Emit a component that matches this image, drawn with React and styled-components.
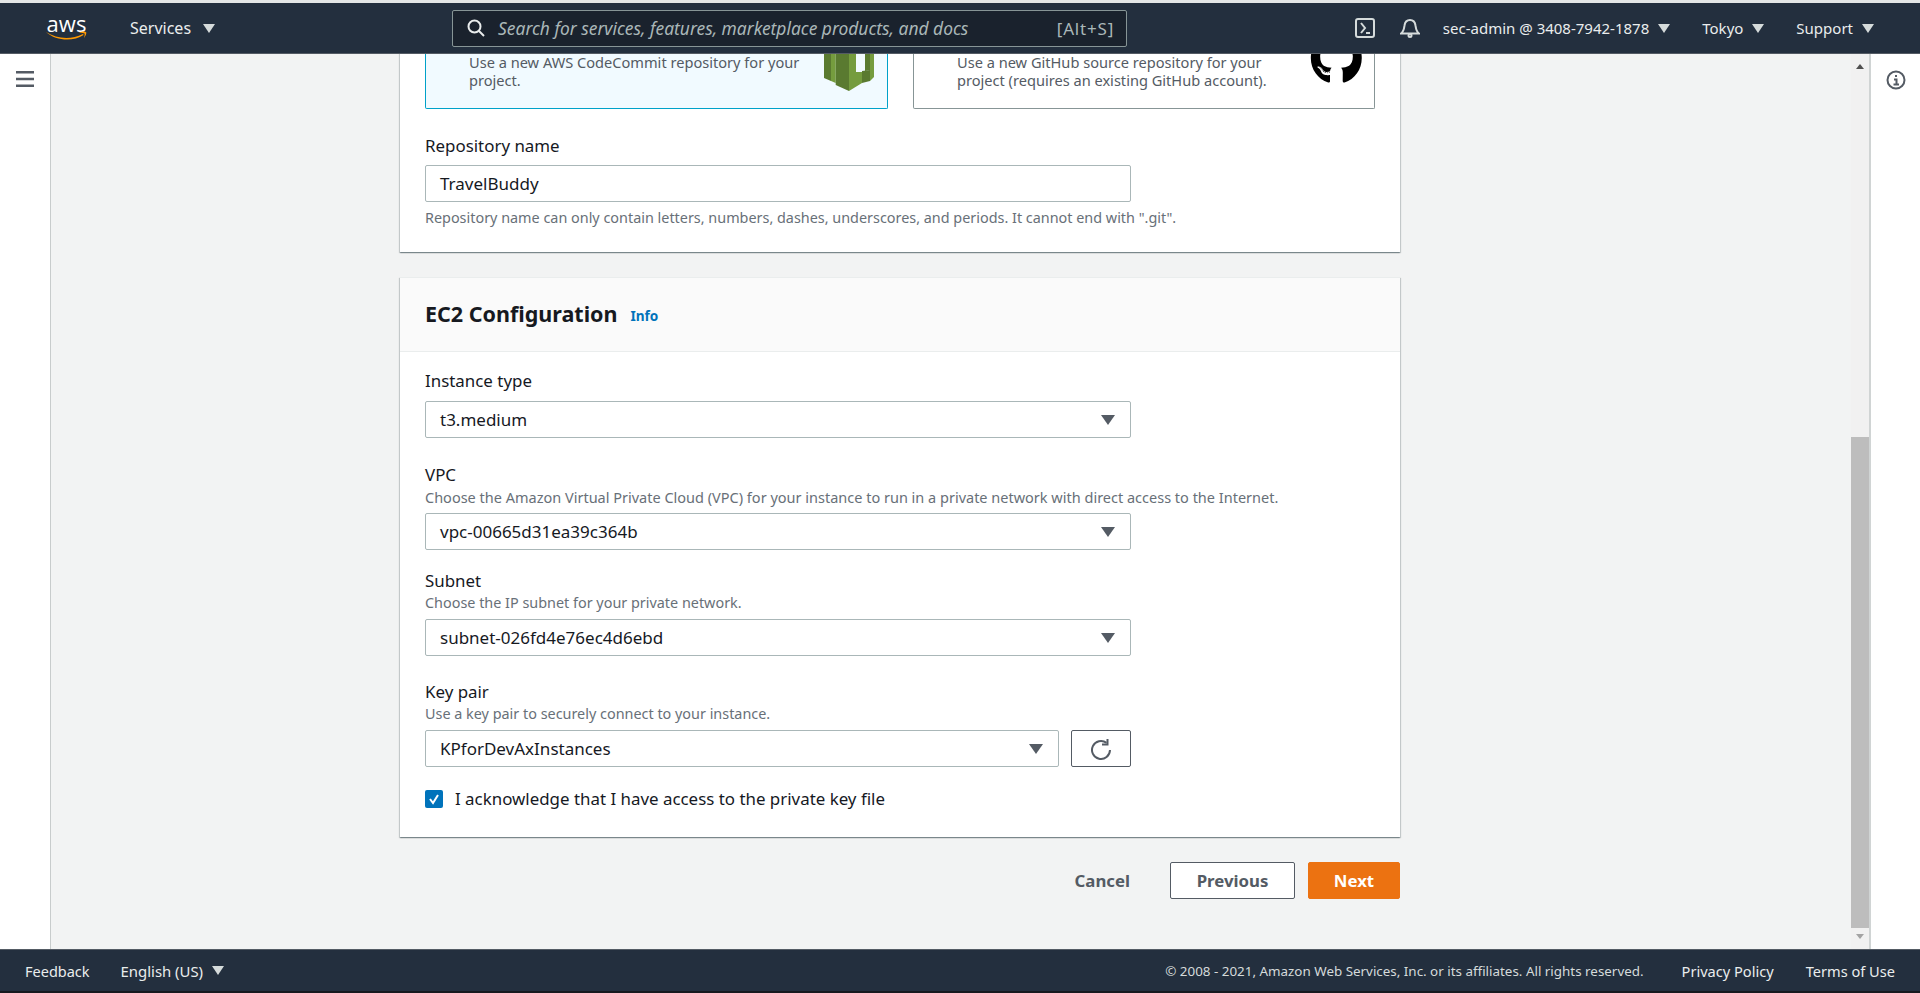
import React from 'react'
import styled, { createGlobalStyle } from 'styled-components'
import { FaGithub } from 'react-icons/fa'

const Global = createGlobalStyle`
  html, body { margin: 0; padding: 0; height: 100%; overflow: hidden; }
  body { font-family: "Noto Sans", "Liberation Sans", sans-serif; font-size: 14px; color: #16191f; }
  * { box-sizing: border-box; }
`

const Page = styled.div`
  height: 993px;
  display: flex;
  flex-direction: column;
  background: #232f3e;
  border-top: 3px solid #e4e6e6;
`

const Header = styled.header`
  height: 51px;
  flex: none;
  display: flex;
  align-items: center;
  padding: 0 46px;
  background: #232f3e;
  color: #eaeded;
  border-bottom: 1px solid #545b64;
`

const Logo = styled.div`
  position: relative;
  width: 41px;
  height: 26px;
  margin-right: 43px;
  color: #fff;
  font-family: "Open Sans", sans-serif;
  font-size: 22px;
  line-height: 17px;
  text-align: center;
  svg { position: absolute; left: 0; bottom: 0; }
`

const NavItem = styled.span`
  display: inline-flex;
  align-items: center;
  gap: ${(p) => p.$gap || 9}px;
  margin-left: ${(p) => p.$left || 0}px;
  font-size: ${(p) => p.$size || 15}px;
  white-space: nowrap;
`

const NavIcon = styled.svg`
  flex: none;
  margin-left: ${(p) => p.$left || 0}px;
`

const Caret = styled.i`
  width: 0;
  height: 0;
  border-left: ${(p) => p.$size || 6}px solid transparent;
  border-right: ${(p) => p.$size || 6}px solid transparent;
  border-top: ${(p) => (p.$size || 6) + 3}px solid ${(p) => p.$color || '#d5dbdb'};
`

const Search = styled.div`
  width: 675px;
  height: 37px;
  margin-left: 237px;
  margin-right: auto;
  display: flex;
  align-items: center;
  padding: 0 12px 0 14px;
  background: #1a222d;
  border: 1px solid #879596;
  border-radius: 2px;
  color: #aab7b8;
  font-size: 17.4px;
  font-style: italic;
  svg { margin-right: 13px; flex: none; }
  span { flex: 1; white-space: nowrap; }
  b { font-size: 17px; letter-spacing: 0.8px; font-style: normal; font-weight: 400; color: #aab7b8; }
`

const Body = styled.div`
  flex: 1;
  min-height: 0;
  display: flex;
  background: #fff;
`

const SideRail = styled.aside`
  width: ${(p) => p.$width}px;
  flex: none;
  display: flex;
  justify-content: center;
  padding-top: ${(p) => (p.$right ? 16 : 17)}px;
  background: #fff;
  border-left: ${(p) => (p.$right ? '2px solid #d0d4d4' : 'none')};
  border-right: ${(p) => (p.$right ? 'none' : '1px solid #c8cccc')};
`

const Main = styled.main`
  flex: 1;
  min-width: 0;
  display: flex;
  flex-direction: column;
  justify-content: flex-end;
  overflow: hidden;
  padding: 0 0 50px 349px;
  background: #f2f3f3;
`

const Scrollbar = styled.div`
  width: 18px;
  flex: none;
  display: flex;
  flex-direction: column;
  align-items: center;
  background: #f1f1f1;
`

const ScrollArrow = styled.i`
  flex: none;
  width: 0;
  height: 0;
  margin: ${(p) => p.$margin};
  border-left: 4px solid transparent;
  border-right: 4px solid transparent;
  ${(p) => (p.$up ? 'border-bottom: 5px solid #505050;' : 'border-top: 5px solid #a3a3a3;')}
`

const ScrollThumb = styled.div`
  width: 18px;
  height: 491px;
  margin-top: auto;
  background: #bdbdbd;
`

const Card = styled.section`
  width: 1000px;
  flex: none;
  background: #fff;
  box-shadow: 0 1px 1px 0 rgba(0, 28, 36, 0.3), 1px 1px 1px 0 rgba(0, 28, 36, 0.15), -1px 1px 1px 0 rgba(0, 28, 36, 0.15);
  & + & { margin-top: 25px; }
`

const CardHeader = styled.div`
  height: 75px;
  display: flex;
  align-items: center;
  gap: 13px;
  padding: 0 0 2px 25px;
  background: #fafafa;
  border-top: 1px solid #eaeded;
  border-bottom: 1px solid #eaeded;
`

const Title = styled.h2`
  margin: 0;
  font-size: 21.5px;
  font-weight: 700;
  color: #16191f;
`

const InfoLink = styled.a`
  margin-top: 4px;
  font-size: 13.6px;
  font-weight: 700;
  color: #0073bb;
`

const CardBody = styled.div`
  padding: ${(p) => p.$top}px 25px ${(p) => p.$bottom}px;
`

const Tiles = styled.div`
  display: grid;
  grid-template-columns: 463px 462px;
  gap: 25px;
  height: 66px;
  margin-bottom: 25px;
`

const Tile = styled.div`
  position: relative;
  overflow: hidden;
  padding: 10px 60px 0 ${(p) => p.$pad}px;
  font-size: 14.6px;
  line-height: 18px;
  color: #545b64;
  background: ${(p) => (p.$selected ? '#f1faff' : '#fff')};
  border: 1px solid ${(p) => (p.$selected ? '#00a1c9' : '#879596')};
  border-top: none;
  border-radius: 0 0 2px 2px;
  p { margin: 0; width: 350px; }
`

const TileIcon = styled.div`
  position: absolute;
  top: ${(p) => p.$top}px;
  left: ${(p) => p.$left}px;
`

const Field = styled.div`
  margin-top: ${(p) => p.$top || 0}px;
`

const Label = styled.div`
  height: 22px;
  padding-top: 3px;
  font-size: 16.9px;
  line-height: 18px;
  color: #16191f;
`

const Hint = styled.div`
  margin-top: ${(p) => p.$top || 3}px;
  font-size: ${(p) => p.$size || 14.4}px;
  line-height: 18px;
  white-space: nowrap;
  color: #687078;
`

const Control = styled.div`
  width: ${(p) => p.$width || 706}px;
  height: 37px;
  margin-top: ${(p) => p.$top || 0}px;
  display: flex;
  align-items: center;
  justify-content: space-between;
  padding: 0 15px 0 14px;
  font-size: 17px;
  background: #fff;
  border: 1px solid #aab7b8;
  border-radius: 2px;
`

const KeyRow = styled.div`
  display: flex;
  gap: 12px;
  margin-top: 7px;
`

const IconButton = styled.button`
  width: 60px;
  height: 37px;
  padding: 0;
  display: flex;
  align-items: center;
  justify-content: center;
  background: #fff;
  border: 1px solid #545b64;
  border-radius: 2px;
`

const CheckRow = styled.label`
  display: flex;
  align-items: center;
  gap: 12px;
  margin-top: 21px;
  font-size: 16.9px;
  line-height: 22px;
`

const CheckBox = styled.span`
  width: 18px;
  height: 18px;
  display: flex;
  align-items: center;
  justify-content: center;
  background: #0073bb;
  border-radius: 2px;
`

const Actions = styled.div`
  width: 1000px;
  flex: none;
  display: flex;
  justify-content: flex-end;
  align-items: center;
  margin-top: 25px;
`

const Button = styled.button`
  height: 37px;
  width: ${(p) => p.$width}px;
  margin-left: ${(p) => p.$left}px;
  font: 700 16.8px "Noto Sans", sans-serif;
  white-space: nowrap;
  border-radius: 2px;
  color: ${(p) => (p.$primary ? '#fff' : '#545b64')};
  background: ${(p) => (p.$primary ? '#ec7211' : p.$plain ? 'transparent' : '#fff')};
  border: 1px solid ${(p) => (p.$primary ? '#ec7211' : p.$plain ? 'transparent' : '#545b64')};
  padding: 0;
  text-align: ${(p) => (p.$plain ? 'right' : 'center')};
`

const Footer = styled.footer`
  height: 44px;
  flex: none;
  display: flex;
  align-items: center;
  padding: 0 25px;
  background: #232f3e;
  color: #eaeded;
  border-top: 1px solid #545b64;
  border-bottom: 2px solid #16191f;
`

const Copyright = styled.span`
  margin-left: auto;
  margin-right: 38px;
  font-size: 13.4px;
  color: #d5dbdb;
`

const Select = ({ children }) => (
  <>
    <span>{children}</span>
    <Caret $color="#545b64" $size={7} />
  </>
)

const Hamburger = () => (
  <svg width="18" height="16" viewBox="0 0 18 16" fill="#545b64">
    <rect width="18" height="2.5" />
    <rect y="6.75" width="18" height="2.5" />
    <rect y="13.5" width="18" height="2.5" />
  </svg>
)

const CommitIcon = () => (
  <svg width="80" height="50" viewBox="0 0 80 50">
    <path d="M14 0h7v31l-7-3z" fill="#5a7a30" />
    <path d="M21 0h4.700v33l-4.700-2z" fill="#759c3e" />
    <path d="M25.700 0H39v41l-13.300-6z" fill="#5a7a30" />
    <path d="M39 0h7v22h6v11l-13 8z" fill="#759c3e" />
    <path d="M52 21l8-1v11l-8 2z" fill="#5a7a30" />
    <path d="M55 0h5v20l-5 1z" fill="#5a7a30" />
    <path d="M60 0h4v27l-4 4z" fill="#759c3e" />
  </svg>
)

export default function App() {
  return (
    <Page>
      <Global />
      <Header>
        <Logo>
          aws
          <svg width="41" height="10" viewBox="0 0 41 10" fill="#f90">
            <path d="M0 1c11 7 25 8 37 2l.6 1C27 11 10 10 0 1z" />
            <path d="M33 1.500c2-1 6-1.500 7-.5s-.5 4-2 6c.5-2 1-4 .5-4.500s-2.500-.5-5.500-1z" />
          </svg>
        </Logo>
        <NavItem $size={16} $gap={12}>Services <Caret /></NavItem>
        <Search>
          <svg width="18" height="18" viewBox="0 0 18 18" fill="none" stroke="#eaeded" strokeWidth="2">
            <circle cx="7.500" cy="7.500" r="6" />
            <path d="M12 12l5 5" />
          </svg>
          <span>Search for services, features, marketplace products, and docs</span>
          <b>[Alt+S]</b>
        </Search>
        <NavIcon width="20" height="20" viewBox="0 0 20 20" fill="none" stroke="#d5dbdb" strokeWidth="2">
          <rect x="1" y="1" width="18" height="18" rx="2" />
          <path d="M6 5l4 5-4 5M11 15h4" />
        </NavIcon>
        <NavIcon $left={25} width="20" height="20" viewBox="0 0 20 20" fill="none" stroke="#d5dbdb" strokeWidth="2">
          <path d="M1 15.500c3-2 3-5 3.500-8C5 4 7 2 10 2s5 2 5.500 5.500c.5 3 .5 6 3.500 8z" />
          <circle cx="10" cy="17.500" r="1.500" />
        </NavIcon>
        <NavItem $left={23}>sec-admin @ 3408-7942-1878 <Caret /></NavItem>
        <NavItem $left={32}>Tokyo <Caret /></NavItem>
        <NavItem $left={32}>Support <Caret /></NavItem>
      </Header>
      <Body>
        <SideRail $width={51}><Hamburger /></SideRail>
        <Main>
          <Card>
            <CardBody $top={0} $bottom={25}>
              <Tiles>
                <Tile $selected $pad={43}>
                  <p>Use a new AWS CodeCommit repository for your project.</p>
                  <TileIcon $top={7} $left={384}><CommitIcon /></TileIcon>
                </Tile>
                <Tile $pad={43}>
                  <p>Use a new GitHub source repository for your project (requires an existing GitHub account).</p>
                  <TileIcon $top={-11} $left={396}><FaGithub size={52.6} color="#000" /></TileIcon>
                </Tile>
              </Tiles>
              <Label>Repository name</Label>
              <Control $top={9}>TravelBuddy</Control>
              <Hint $top={7}>Repository name can only contain letters, numbers, dashes, underscores, and periods. It cannot end with ".git".</Hint>
            </CardBody>
          </Card>
          <Card>
            <CardHeader>
              <Title>EC2 Configuration</Title>
              <InfoLink>Info</InfoLink>
            </CardHeader>
            <CardBody $top={17} $bottom={27}>
              <Field>
                <Label>Instance type</Label>
                <Control $top={10}><Select>t3.medium</Select></Control>
              </Field>
              <Field $top={25}>
                <Label>VPC</Label>
                <Hint $size={14.5}>Choose the Amazon Virtual Private Cloud (VPC) for your instance to run in a private network with direct access to the Internet.</Hint>
                <Control $top={7}><Select>vpc-00665d31ea39c364b</Select></Control>
              </Field>
              <Field $top={19}>
                <Label>Subnet</Label>
                <Hint>Choose the IP subnet for your private network.</Hint>
                <Control $top={7}><Select>subnet-026fd4e76ec4d6ebd</Select></Control>
              </Field>
              <Field $top={24}>
                <Label>Key pair</Label>
                <Hint>Use a key pair to securely connect to your instance.</Hint>
                <KeyRow>
                  <Control $width={634}><Select>KPforDevAxInstances</Select></Control>
                  <IconButton aria-label="Refresh">
                    <svg width="22" height="22" viewBox="0 0 22 22" fill="none" stroke="#545b64" strokeWidth="2">
                      <path d="M16.500 4.800a9 9 0 1 0 3.500 7.200" />
                      <path d="M17.500 1v5.500H12" />
                    </svg>
                  </IconButton>
                </KeyRow>
              </Field>
              <CheckRow>
                <CheckBox>
                  <svg width="12" height="12" viewBox="0 0 12 12" fill="none" stroke="#fff" strokeWidth="2">
                    <path d="M2 6l3 4 5-8" />
                  </svg>
                </CheckBox>
                I acknowledge that I have access to the private key file
              </CheckRow>
            </CardBody>
          </Card>
          <Actions>
            <Button $plain $width={60}>Cancel</Button>
            <Button $width={125} $left={39}>Previous</Button>
            <Button $primary $width={92} $left={13}>Next</Button>
          </Actions>
        </Main>
        <Scrollbar>
          <ScrollArrow $up $margin="10px 0 0" />
          <ScrollThumb />
          <ScrollArrow $margin="6px 0 10px" />
        </Scrollbar>
        <SideRail $width={51} $right>
          <svg width="20" height="20" viewBox="0 0 20 20" fill="none" stroke="#545b64" strokeWidth="2">
            <circle cx="10" cy="10" r="8.500" />
            <path d="M10 5v2M8 9.500h2.500V14M7.500 14.500h5.500" />
          </svg>
        </SideRail>
      </Body>
      <Footer>
        <NavItem $size={14.5}>Feedback</NavItem>
        <NavItem $size={14.9} $left={31}>English (US) <Caret /></NavItem>
        <Copyright>© 2008 - 2021, Amazon Web Services, Inc. or its affiliates. All rights reserved.</Copyright>
        <NavItem $size={14.6}>Privacy Policy</NavItem>
        <NavItem $size={14.6} $left={32}>Terms of Use</NavItem>
      </Footer>
    </Page>
  )
}
